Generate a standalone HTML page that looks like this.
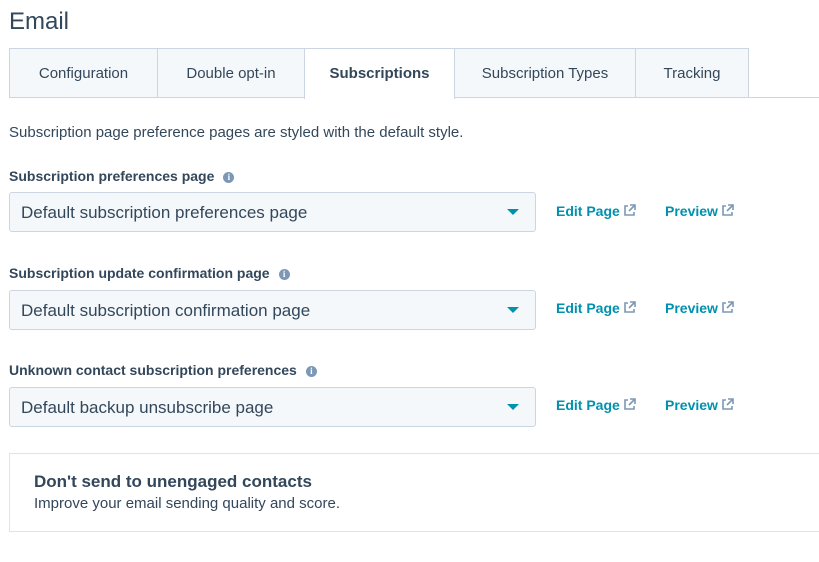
<!DOCTYPE html><html><head><style>
body{margin:0;width:819px;height:562px;background:#fff;font-family:"Liberation Sans",sans-serif;color:#33475b;position:relative;overflow:hidden}
.a{position:absolute}
h1{position:absolute;left:9px;top:8px;margin:0;font-size:24px;font-weight:normal;color:#33475b}
.tab{position:absolute;top:48px;height:50px;background:#f5f8fa;border:1px solid #cbd6e2;box-sizing:border-box;font-size:15px;line-height:50px;text-align:center;color:#33475b}
.act{background:#fff;border-bottom:none;height:51px;font-weight:bold;z-index:2}
.lbl{position:absolute;left:9px;font-size:14px;font-weight:bold}
.info{display:inline-block;width:11px;height:11px;border-radius:50%;background:#7c98b6;color:#fff;font-size:9px;line-height:11px;text-align:center;margin-left:9px;vertical-align:1px;font-family:"Liberation Serif",serif;font-weight:bold}
.sel{position:absolute;left:9px;width:527px;height:40px;box-sizing:border-box;background:#f5f8fa;border:1px solid #cbd6e2;border-radius:3px;font-size:17px;line-height:40px;padding-left:11px}
.sel:after{content:"";position:absolute;right:16px;top:16px;border:6px solid transparent;border-top:6px solid #0091ae;border-bottom:0}
.lk{position:absolute;font-size:14px;font-weight:bold;color:#0091ae}
.lk svg{vertical-align:-1px;margin-left:3px}
</style></head><body>
<h1>Email</h1>
<div class="a" style="left:9px;top:97px;width:810px;height:1px;background:#cbd6e2"></div>
<div class="tab" style="left:9px;width:149px">Configuration</div>
<div class="tab" style="left:157px;width:148px">Double opt-in</div>
<div class="tab act" style="left:304px;width:151px">Subscriptions</div>
<div class="tab" style="left:454px;width:182px">Subscription Types</div>
<div class="tab" style="left:635px;width:114px">Tracking</div>
<div class="a" style="left:9px;top:124px;font-size:15px">Subscription page preference pages are styled with the default style.</div>

<div class="lbl" style="top:168px">Subscription preferences page<span class="info">i</span></div>
<div class="sel" style="top:192px">Default subscription preferences page</div>
<div class="lbl" style="top:265px">Subscription update confirmation page<span class="info">i</span></div>
<div class="sel" style="top:290px">Default subscription confirmation page</div>
<div class="lbl" style="top:362px">Unknown contact subscription preferences<span class="info">i</span></div>
<div class="sel" style="top:387px">Default backup unsubscribe page</div>

<svg width="0" height="0" style="position:absolute"><defs><g id="ext"><path d="M5 2H2v9h9V8" fill="none" stroke="#7c98b6" stroke-width="1.6"/><path d="M7 1h5v5M12 1L6 7" fill="none" stroke="#7c98b6" stroke-width="1.6"/></g></defs></svg>
<div class="lk" style="left:556px;top:203px">Edit Page<svg width="13" height="13"><use href="#ext"/></svg></div>
<div class="lk" style="left:665px;top:203px">Preview<svg width="13" height="13"><use href="#ext"/></svg></div>
<div class="lk" style="left:556px;top:300px">Edit Page<svg width="13" height="13"><use href="#ext"/></svg></div>
<div class="lk" style="left:665px;top:300px">Preview<svg width="13" height="13"><use href="#ext"/></svg></div>
<div class="lk" style="left:556px;top:397px">Edit Page<svg width="13" height="13"><use href="#ext"/></svg></div>
<div class="lk" style="left:665px;top:397px">Preview<svg width="13" height="13"><use href="#ext"/></svg></div>

<div class="a" style="left:9px;top:453px;width:820px;height:79px;border:1px solid #dfe3eb;box-sizing:border-box"></div>
<div class="a" style="left:34px;top:472px;font-size:17px;font-weight:bold">Don't send to unengaged contacts</div>
<div class="a" style="left:34px;top:495px;font-size:15px">Improve your email sending quality and score.</div>
</body></html>
